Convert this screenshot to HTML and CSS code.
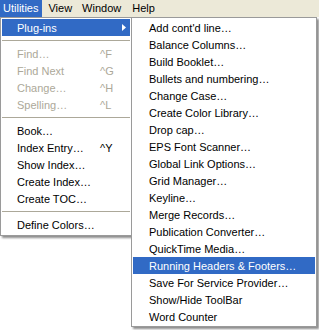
FILE: index.html
```html
<!DOCTYPE html>
<html>
<head>
<meta charset="utf-8">
<link rel="stylesheet" href="styles.css">
</head>
<body>
<div class="screen">
  <div class="menubar">
    <span class="mb-item mb-active mb-first">Utilities</span>
    <span class="mb-item">View</span>
    <span class="mb-item mb-window">Window</span>
    <span class="mb-item">Help</span>
  </div>
  <div class="menus">
    <div class="menu main">
      <div class="item hl"><span class="label">Plug-ins</span><svg class="arrow" width="4" height="7" viewBox="0 0 4 7"><polygon points="0,0 4,3.5 0,7" fill="#fff"/></svg></div>
      <div class="sep"></div>
      <div class="item dis"><span class="label">Find…</span><span class="key">^F</span></div>
      <div class="item dis"><span class="label">Find Next</span><span class="key">^G</span></div>
      <div class="item dis"><span class="label">Change…</span><span class="key">^H</span></div>
      <div class="item dis"><span class="label">Spelling…</span><span class="key">^L</span></div>
      <div class="sep"></div>
      <div class="item"><span class="label">Book…</span></div>
      <div class="item"><span class="label">Index Entry…</span><span class="key">^Y</span></div>
      <div class="item"><span class="label">Show Index…</span></div>
      <div class="item"><span class="label">Create Index…</span></div>
      <div class="item"><span class="label">Create TOC…</span></div>
      <div class="sep"></div>
      <div class="item"><span class="label">Define Colors…</span></div>
    </div>
    <div class="menu sub">
      <div class="item"><span class="label">Add cont'd line…</span></div>
      <div class="item"><span class="label">Balance Columns…</span></div>
      <div class="item"><span class="label">Build Booklet…</span></div>
      <div class="item"><span class="label">Bullets and numbering…</span></div>
      <div class="item"><span class="label">Change Case…</span></div>
      <div class="item"><span class="label">Create Color Library…</span></div>
      <div class="item"><span class="label">Drop cap…</span></div>
      <div class="item"><span class="label">EPS Font Scanner…</span></div>
      <div class="item"><span class="label">Global Link Options…</span></div>
      <div class="item"><span class="label">Grid Manager…</span></div>
      <div class="item"><span class="label">Keyline…</span></div>
      <div class="item"><span class="label">Merge Records…</span></div>
      <div class="item"><span class="label">Publication Converter…</span></div>
      <div class="item"><span class="label">QuickTime Media…</span></div>
      <div class="item hl"><span class="label">Running Headers &amp; Footers…</span></div>
      <div class="item"><span class="label">Save For Service Provider…</span></div>
      <div class="item"><span class="label">Show/Hide ToolBar</span></div>
      <div class="item"><span class="label">Word Counter</span></div>
    </div>
  </div>
</div>
</body>
</html>
```
FILE: styles.css
```css
* { box-sizing: border-box; }
html, body {
  margin: 0;
  padding: 0;
  background: #ffffff;
}
body {
  font-family: "Liberation Sans", Arial, sans-serif;
  font-size: 11px;
  color: #000;
  width: 319px;
  height: 330px;
  overflow: hidden;
}
.screen {
  position: relative;
  width: 319px;
  height: 330px;
}
.menubar {
  display: flex;
  height: 17px;
  background: #ece9d8;
  align-items: stretch;
}
.mb-item {
  display: flex;
  align-items: center;
  padding: 0 5px;
  line-height: 17px;
}
.mb-first {
  padding: 0 4px 0 3px;
  margin-right: 1px;
}
.mb-window {
  padding: 0 6px 0 5px;
}
.mb-active {
  background: #316ac5;
  color: #fff;
}
.menus {
  position: relative;
  height: 313px;
}
.menu {
  position: absolute;
  top: 0;
  background: #fff;
  border: 1px solid #9a9a9a;
  box-shadow: 2px 2px 2px rgba(0, 0, 0, 0.45);
  display: flex;
  flex-direction: column;
}
.main {
  left: 0;
  width: 132px;
  padding: 1px 1px 2px 1px;
}
.sub {
  left: 131px;
  width: 186px;
  padding: 1px;
}
.item {
  display: flex;
  align-items: center;
  height: 17px;
  padding-left: 15px;
  white-space: nowrap;
  position: relative;
}
.main .label {
  width: 83px;
}
.sub .item {
  padding-left: 16px;
}
.item.hl {
  background: #316ac5;
  color: #fff;
}
.item.dis {
  color: #aca899;
}
.arrow {
  position: absolute;
  left: 120px;
  top: 5px;
}
.sep {
  height: 9px;
  display: flex;
  align-items: center;
}
.sep::before {
  content: "";
  display: block;
  width: 100%;
  height: 1px;
  background: #aca899;
}
```
